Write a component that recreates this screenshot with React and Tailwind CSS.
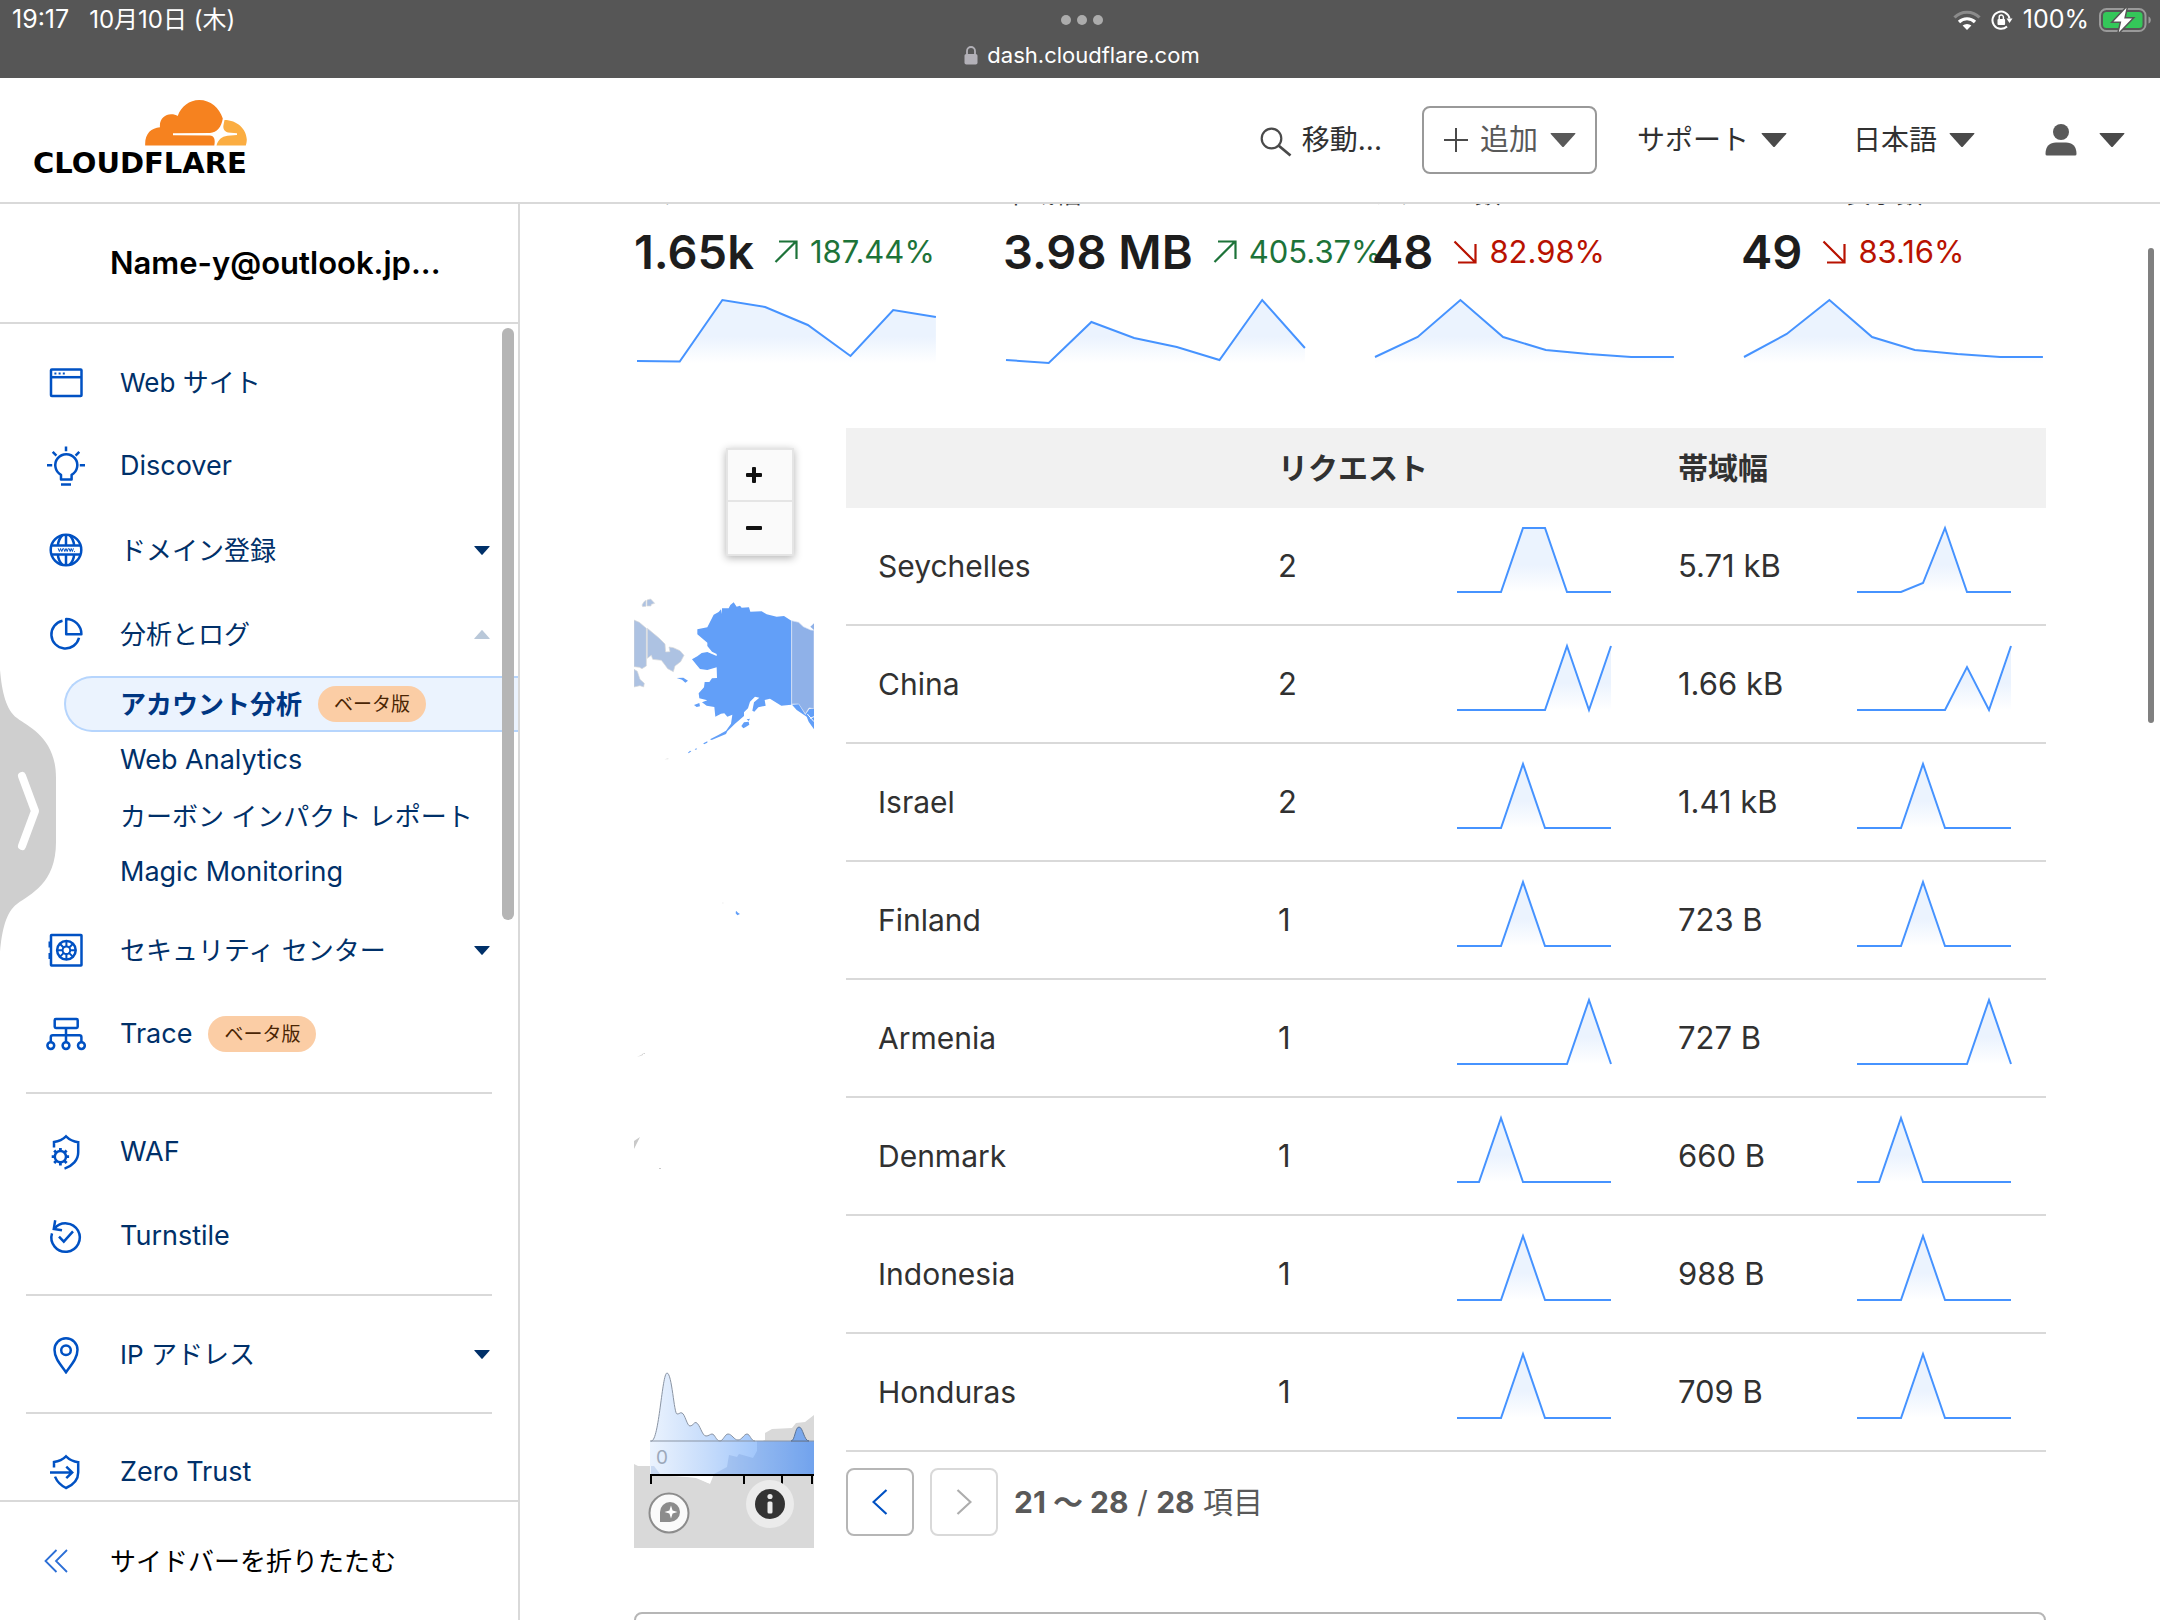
import React, { useId } from "react";

const sparkX = (i, step, start) => start + i * step;

function Sparkline({ ys, width, height, start, step, base, className }) {
  const id = useId();
  const pts = ys.map((y, i) => `${sparkX(i, step, start)},${y}`);
  const last = sparkX(ys.length - 1, step, start);
  return (
    <svg viewBox={`0 0 ${width} ${height}`} preserveAspectRatio="none" className={className} aria-hidden="true">
      <defs>
        <linearGradient id={id} x1="0" y1="0" x2="0" y2={base} gradientUnits="userSpaceOnUse">
          <stop offset="0.6" stopColor="#ebf3fe" />
          <stop offset="1" stopColor="#ffffff" />
        </linearGradient>
      </defs>
      <polygon points={`${start},${base} ${pts.join(" ")} ${last},${base}`} fill={`url(#${id})`} />
      <polyline points={pts.join(" ")} fill="none" stroke="#4693ff" strokeWidth="2" vectorEffect="non-scaling-stroke" />
    </svg>
  );
}

const RowSpark = ({ v }) => (
  <Sparkline
    ys={v.map((n) => 68 - 64 * n)}
    width={160}
    height={84}
    start={3}
    step={22}
    base={68}
    className="h-[84px] w-[160px]"
  />
);

const peak = (at) => Array.from({ length: 8 }, (_, i) => (i === at ? 1 : 0));

const rows = [
  { name: "Seychelles", req: "2", bw: "5.71 kB", a: [0, 0, 0, 1, 1, 0, 0, 0], b: [0, 0, 0, 0.14, 1, 0, 0, 0] },
  { name: "China", req: "2", bw: "1.66 kB", a: [0, 0, 0, 0, 0, 1, 0, 1], b: [0, 0, 0, 0, 0, 0.67, 0, 1] },
  { name: "Israel", req: "2", bw: "1.41 kB", a: peak(3), b: peak(3) },
  { name: "Finland", req: "1", bw: "723 B", a: peak(3), b: peak(3) },
  { name: "Armenia", req: "1", bw: "727 B", a: peak(6), b: peak(6) },
  { name: "Denmark", req: "1", bw: "660 B", a: peak(2), b: peak(2) },
  { name: "Indonesia", req: "1", bw: "988 B", a: peak(3), b: peak(3) },
  { name: "Honduras", req: "1", bw: "709 B", a: peak(3), b: peak(3) },
];

const stats = [
  { label: "リクエスト", value: "1.65k", pct: "187.44%", up: true, ys: [64, 64.5, 3, 10, 28, 59, 13, 20] },
  { label: "帯域幅", value: "3.98 MB", pct: "405.37%", up: true, ys: [63, 66, 25, 41, 50, 63, 3, 51] },
  { label: "アクセス数", value: "48", pct: "82.98%", up: false, ys: [60, 40, 3, 40, 53, 57, 60, 60] },
  { label: "ページの表示数", value: "49", pct: "83.16%", up: false, ys: [60, 37, 3, 40, 53, 57, 60, 60] },
];

const NavSvg = ({ children }) => (
  <svg viewBox="0 0 40 40" className="size-10 shrink-0" fill="none" stroke="#0051c3" strokeWidth="2.5" aria-hidden="true">
    {children}
  </svg>
);

const icons = {
  site: (
    <NavSvg>
      <rect x="5" y="7.5" width="30.5" height="26.5" rx="0.8" />
      <path d="M5 15.2H35.5" />
      <path d="M8.4 11.4h2M12.6 11.4h2M16.8 11.4h2" strokeWidth="2" />
    </NavSvg>
  ),
  bulb: (
    <NavSvg>
      <path d="M15 33.5V28.8A11 11 0 1 1 25.6 28.8V33.5Z" strokeLinejoin="round" />
      <path d="M15 38.6H25M20 0.4V5.2M1 19.2H6.2M33.8 19.2H39M6.7 5.9L10.4 9.6M33.3 5.9L29.6 9.6" />
    </NavSvg>
  ),
  globe: (
    <NavSvg>
      <circle cx="20" cy="20" r="15.3" />
      <path d="M6 15.6H34M6 24.4H34M20 4.7V15.6M20 24.4V35.3M16.5 5C13.5 8 12.2 11.5 11.8 15.6M23.5 5C26.5 8 27.8 11.5 28.2 15.6M16.5 35C13.5 32 12.2 28.5 11.8 24.4M23.5 35C26.5 32 27.8 28.5 28.2 24.4" />
      <path d="M12.2 18.3l1.2 3.2 1.2-3 1.2 3 1.2-3.2M17.6 18.3l1.2 3.2 1.2-3 1.2 3 1.2-3.2M23 18.3l1.2 3.2 1-3 1.2 3 1-3.2M28 21.6h.9" strokeWidth="1" />
    </NavSvg>
  ),
  pie: (
    <NavSvg>
      <path d="M16.5 6.8A14 14 0 1 0 33 23.8" />
      <path d="M20.2 5V20.2H35.4A15.2 15.2 0 0 0 20.2 5Z" strokeLinejoin="round" />
    </NavSvg>
  ),
  safe: (
    <NavSvg>
      <rect x="5" y="5" width="30.5" height="30.5" rx="0.5" />
      <path d="M4 11.5v6M4 23v6" strokeWidth="3" />
      <circle cx="20.4" cy="20.3" r="9.3" />
      <circle cx="20.4" cy="20.3" r="3.8" strokeWidth="2" />
      <path d="M20.4 11v5.500M20.4 24.1v5.500M11.1 20.3h5.500M24.2 20.3h5.500M13.8 13.7l4 4M23 22.9l4 4M13.8 26.9l4-4M23 17.7l4-4" strokeWidth="2" />
    </NavSvg>
  ),
  trace: (
    <NavSvg>
      <rect x="8.700" y="5" width="23" height="9" rx="1.200" />
      <path d="M20 14V28M4.800 28V23.200Q4.800 21.200 6.800 21.200H33.400Q35.400 21.200 35.400 23.200V28" />
      <circle cx="4.800" cy="31.600" r="3.400" />
      <circle cx="20" cy="31.600" r="3.400" />
      <circle cx="35.400" cy="31.600" r="3.400" />
    </NavSvg>
  ),
  waf: (
    <NavSvg>
      <path d="M8 15.5V10C13 9.2 17 7.2 20 4.3C23 7.2 27.5 9.5 32.2 10.2V20.5C32.2 28 26.5 34 18.5 36.6" />
      <circle cx="14.4" cy="24.7" r="5.6" />
      <path d="M14.4 16v3M14.4 30.4v3M5.7 24.7h3M20.1 24.7h3M8.2 18.5l2.2 2.2M18.4 28.7l2.2 2.2M8.2 30.9l2.2-2.2M18.4 20.7l2.2-2.2" strokeWidth="2.8" />
    </NavSvg>
  ),
  turnstile: (
    <NavSvg>
      <path d="M8.4 12.8A14.2 14.2 0 1 1 6 17.4" />
      <path d="M9.2 4.3L7.8 12.9L16 14.3" />
      <path d="M13 20.6L17.8 25.6L27 15.4" />
    </NavSvg>
  ),
  pin: (
    <NavSvg>
      <path d="M20 38.2C15 31 8.5 24.5 8.5 15.8A11.5 11.5 0 0 1 31.5 15.8C31.5 24.5 25 31 20 38.2Z" />
      <circle cx="20" cy="16.2" r="4.8" />
    </NavSvg>
  ),
  zero: (
    <NavSvg>
      <path d="M8 15.5V10C13 9.2 17 7.2 20 4.3C23 7.2 27.5 9.5 32.2 10.2V20.5C32.2 28 27 33 20 36C14.5 33.2 11 29.5 9 24.6" />
      <path d="M4 20.4H26M20.3 14.6L26.2 20.4L20.3 26.2" />
    </NavSvg>
  ),
};

const Caret = ({ className = "h-[14px] w-[26px] text-[#4a4a4a]" }) => (
  <svg viewBox="0 0 26 14" preserveAspectRatio="none" className={className} fill="currentColor" aria-hidden="true">
    <path d="M1.2 0H24.8Q26 0 25.2 1L14 13.4Q13 14.4 12 13.4L0.8 1Q0 0 1.2 0Z" />
  </svg>
);

const Beta = () => (
  <span className="flex h-9 items-center rounded-full bg-[#fbcda5] px-4 text-[19px] leading-none text-[#4a2504]">ベータ版</span>
);

function NavItem({ icon, label, caret, badge, latin }) {
  return (
    <a href="#" className="flex h-[84px] items-center pl-[46px] pr-7 text-[#003069]">
      {icons[icon]}
      <span className={latin ? "pl-[34px] pr-4 text-[27px]" : "pl-[34px] pr-4"}>{label}</span>
      {badge && <Beta />}
      {caret && (
        <Caret
          className={caret === "up" ? "ml-auto h-[9px] w-4 rotate-180 text-[#b9c8d9]" : "ml-auto h-[9px] w-4 text-[#003069]"}
        />
      )}
    </a>
  );
}

const Divider = () => <hr className="my-4 ml-[26px] mr-[26px] border-t-2 border-[#d9d9d9]" />;

function CloudLogo() {
  return (
    <svg viewBox="0 0 102 46" className="h-[46px] w-[102px]" aria-hidden="true">
      <path
        fill="#f6821f"
        d="M0.2 45.6C-0.5 34 6 28 15 27.3C14 19 20 14.2 26 14.2C29 14.2 31 14.8 32.7 16C36 6.5 44.5 0 54.2 0C65.5 0 74.5 8 77.8 18.5C76.5 27 72 32.5 65 33L28 33.2V35.2L65 35.6C69 36.2 70.5 38.5 69.3 45.6Z"
      />
      <path
        fill="#fbad41"
        d="M79.5 20C92 20 101.500 29 101.800 39.500C101.800 42 101.200 44 100.800 45.600H71.500C73 40 76.500 36.500 82.500 35.800L92 35V33.300L83 32.600C79 31.500 77.800 28 78.500 25Z"
      />
    </svg>
  );
}

function StatusBar() {
  return (
    <div className="flex h-[78px] shrink-0 items-start justify-between bg-[#565656] pl-3 pr-2 text-[25px] text-white">
      <div className="flex h-10 flex-1 items-center gap-5">
        <span>19:17</span>
        <span className="text-[24px]">10月10日 (木)</span>
      </div>
      <div className="flex flex-col items-center">
        <div className="flex h-10 items-center gap-[6px]">
          <span className="size-[10px] rounded-full bg-[#acacac]" />
          <span className="size-[10px] rounded-full bg-[#acacac]" />
          <span className="size-[10px] rounded-full bg-[#acacac]" />
        </div>
        <div className="flex h-[30px] items-center gap-[9px]">
          <svg viewBox="0 0 14 19" className="h-[19px] w-[14px]" aria-hidden="true">
            <rect x="0.5" y="8" width="13" height="10.5" rx="1.8" fill="#b3b1b8" />
            <path d="M3 8.5V5A4 4 0 0 1 11 5V8.5" fill="none" stroke="#b3b1b8" strokeWidth="1.8" />
          </svg>
          <span className="text-[22px]">dash.cloudflare.com</span>
        </div>
      </div>
      <div className="flex h-10 flex-1 items-center justify-end gap-[10px]">
        <svg viewBox="0 0 28 20" className="h-5 w-7" fill="none" aria-hidden="true">
          <path d="M1.5 7.5A17.5 17.5 0 0 1 26.5 7.5" stroke="#8b8b8b" strokeWidth="3.2" />
          <path d="M6 12A11.5 11.5 0 0 1 22 12" stroke="#fff" strokeWidth="3.2" />
          <path d="M9.6 15.6A6.5 6.5 0 0 1 18.4 15.6L14 20Z" fill="#fff" />
        </svg>
        <svg viewBox="0 0 22 20" className="h-5 w-[22px]" fill="none" aria-hidden="true">
          <path d="M18.5 8.5A8.6 8.6 0 1 0 16 16.5" stroke="#fff" strokeWidth="2" />
          <path d="M15.5 8.5H21.5L18.5 13Z" fill="#fff" />
          <rect x="6.5" y="9" width="7.6" height="6" rx="1" fill="#fff" />
          <path d="M8.2 9V7.2A2.1 2.1 0 0 1 12.4 7.2V9" stroke="#fff" strokeWidth="1.5" />
        </svg>
        <span>100%</span>
        <svg viewBox="0 0 53 26" className="h-[26px] w-[53px]" aria-hidden="true">
          <rect x="1" y="2" width="45.5" height="22" rx="6.5" fill="none" stroke="#9a9a9a" strokeWidth="2" />
          <rect x="4" y="5" width="39.5" height="16" rx="3.5" fill="#34c759" />
          <path d="M49.5 9.5C52.6 10.5 52.6 15.5 49.5 16.5Z" fill="#9a9a9a" />
          <path d="M27.5 0.8L14.5 14.5H22.3L19.8 25.3L33 11.5H25.2Z" fill="#fff" stroke="#565656" strokeWidth="3" paintOrder="stroke" />
        </svg>
      </div>
    </div>
  );
}

function Header() {
  return (
    <header className="flex h-[126px] shrink-0 items-center justify-between border-b-2 border-[#d9d9d9] pl-[33px] pr-[35px] text-[28px] text-[#313131]">
      <a href="#" className="flex flex-col items-end text-black">
        <CloudLogo />
        <span className="font-['DejaVu_Sans',sans-serif] text-[29px] font-bold leading-[34px]">CLOUDFLARE</span>
      </a>
      <div className="flex items-center">
        <button type="button" className="flex items-center gap-[10px]">
          <svg viewBox="0 0 32 30" className="mt-1 h-[30px] w-8" fill="none" stroke="#4a4a4a" strokeWidth="2.2" aria-hidden="true">
            <circle cx="11.5" cy="11.5" r="9.8" />
            <path d="M18.5 18.5L30.5 28.5" strokeWidth="2.8" />
          </svg>
          移動...
        </button>
        <button type="button" className="ml-10 flex h-[68px] items-center rounded-lg border-2 border-[#999999] pl-[19px] pr-[19px] text-[29px] text-[#595959]">
          <svg viewBox="0 0 26 26" className="mr-[11px] size-[26px]" stroke="#4a4a4a" strokeWidth="2" aria-hidden="true">
            <path d="M13 1V25M1 13H25" />
          </svg>
          追加
          <Caret className="ml-3 h-[14px] w-[26px] text-[#595959]" />
        </button>
        <button type="button" className="ml-10 flex items-center gap-3">
          サポート
          <Caret />
        </button>
        <button type="button" className="ml-[66px] flex items-center gap-3">
          日本語
          <Caret />
        </button>
        <button type="button" aria-label="アカウント" className="ml-[70px] flex items-center gap-[22px]">
          <svg viewBox="0 0 32 32" className="size-8" fill="#595959" aria-hidden="true">
            <ellipse cx="16" cy="8" rx="8" ry="8" />
            <path d="M0.5 30C0.5 22 5 18.5 11 18.5H21C27 18.5 31.5 22 31.5 30Q31.5 31.5 30 31.5H2Q0.5 31.5 0.5 30Z" />
          </svg>
          <Caret />
        </button>
      </div>
    </header>
  );
}

function Sidebar() {
  return (
    <aside className="relative flex w-[520px] shrink-0 flex-col border-r-2 border-[#d9d9d9] text-[26px]">
      <div className="flex h-[120px] shrink-0 items-center border-b-2 border-[#d9d9d9] pl-[110px] text-[31px] font-semibold text-black">
        Name-y@outlook.jp...
      </div>
      <nav className="min-h-0 flex-1 overflow-hidden pt-4">
        <NavItem icon="site" label="Web サイト" />
        <NavItem icon="bulb" label="Discover" latin />
        <NavItem icon="globe" label="ドメイン登録" caret="down" />
        <NavItem icon="pie" label="分析とログ" caret="up" />
        <div className="mb-2 ml-16 text-[#003069]">
          <a
            href="#"
            className="flex h-14 items-center gap-4 rounded-l-full border-2 border-r-0 border-[#b6d5fd] bg-[#ebf3fe] pl-[54px] font-bold text-[#003682]"
          >
            アカウント分析
            <span className="font-normal">
              <Beta />
            </span>
          </a>
          <a href="#" className="flex h-14 items-center pl-14 text-[27px]">Web Analytics</a>
          <a href="#" className="flex h-14 items-center pl-14">カーボン インパクト レポート</a>
          <a href="#" className="flex h-14 items-center pl-14 text-[27px]">Magic Monitoring</a>
        </div>
        <NavItem icon="safe" label="セキュリティ センター" caret="down" />
        <NavItem icon="trace" label="Trace" badge latin />
        <Divider />
        <NavItem icon="waf" label="WAF" latin />
        <NavItem icon="turnstile" label="Turnstile" latin />
        <Divider />
        <NavItem icon="pin" label="IP アドレス" caret="down" />
        <Divider />
        <NavItem icon="zero" label="Zero Trust" latin />
      </nav>
      <button type="button" className="flex h-[120px] shrink-0 items-center border-t-2 border-[#d9d9d9] pl-11 text-black">
        <svg viewBox="0 0 24 24" className="size-6" fill="none" stroke="#2c6fd6" strokeWidth="1.8" aria-hidden="true">
          <path d="M12.5 1L1.5 12L12.5 23M23 1L12 12L23 23" />
        </svg>
        <span className="pl-[42px]">サイドバーを折りたたむ</span>
      </button>
      <div className="absolute right-1 top-[124px] h-[592px] w-3 rounded-full bg-[#b5b5b5]" />
      <button type="button" aria-label="開く" className="absolute left-0 top-[466px] h-[282px] w-14">
        <svg viewBox="0 0 56 282" className="h-full w-full" aria-hidden="true">
          <path
            fill="#cfcfcf"
            d="M0 0C2 22 6 40 17 48C30 58 56 68 56 108V172C56 214 30 224 17 234C6 242 2 260 0 282Z"
          />
          <path d="M22 106L35 141L22 176" fill="none" stroke="#fff" strokeWidth="8" strokeLinecap="round" strokeLinejoin="round" />
        </svg>
      </button>
    </aside>
  );
}

function WorldMap() {
  return (
    <div className="relative h-[1120px] w-[180px] shrink-0 overflow-hidden">
      <svg viewBox="0 0 180 1120" className="h-full w-full" aria-hidden="true">
        <defs>
          <linearGradient id="legend" x1="16" y1="0" x2="180" y2="0" gradientUnits="userSpaceOnUse">
            <stop offset="0" stopColor="#ebf3fe" />
            <stop offset="0.35" stopColor="#c6dcfb" />
            <stop offset="0.65" stopColor="#a2c7fb" />
            <stop offset="1" stopColor="#78acf8" />
          </linearGradient>
        </defs>
        <g transform="translate(-14 -8) scale(0.33333)">
          <g fill="#adc2e2" stroke="#d9d9d9" strokeWidth="2">
            <path d="M42 600L58 607L79 625L79 738L66 746L58 742L42 740Z" />
            <path d="M42 748L52 754L60 778L73 790L71 801L60 797L42 801Z" />
            <path d="M82 625L100 640L118 655L135 672L137 696L150 695L147 681L160 683L180 692L192 706L182 725L165 738L160 755L143 746L135 735L124 721L98 718L94 706L82 715Z" />
            <path d="M66 555L72 545L78 541V559L68 560Z" />
            <path d="M81 540L92 537L104 550L94 553L93 558H81Z" />
          </g>
          <path
            fill="#629ff8"
            d="M232 628L262 622L281 584L296 576L303 568L306 582V565H326L331 555L341 547L350 560L360 557L365 563L387 562L391 575L425 574L440 583L470 590L492 588L514 602V854L484 857L450 836L434 840L437 857L415 862L403 875L397 872L402 847L418 833L405 830L390 845L384 865L372 877V888L345 911L322 934L318 942L275 960L270 958L295 945L318 932L333 911L337 884L322 890L313 880L303 881L286 890L283 861L260 857L246 847L262 841L238 835L236 820L252 802L254 786L268 786L276 775L291 774L290 742L262 750L240 747L230 735L216 718L232 709L245 699L262 696L290 708V702L276 695L262 678L262 668L232 643Z"
          />
          <path fill="#8fb1e8" stroke="#d9e3f5" strokeWidth="2" d="M515 602L536 607L550 620L572 630L582 631V866L567 864L556 882L536 852H515Z" />
          <path fill="#629ff8" d="M516 854L536 853L556 884L568 867L582 866V928L566 905L560 890L530 870Z" />
          <path fill="none" stroke="#fff" strokeWidth="3" d="M562 882L582 905M570 895L582 890" />
          <path fill="#8fb1e8" d="M571 620L582 610V630Z" />
          <path
            fill="#629ff8"
            d="M170 774L190 773L204 782L196 788L186 779ZM222 855L238 849L240 859L230 861ZM364 918L372 907L386 905L388 914L376 922L370 925ZM380 898L390 896L386 903ZM250 970L262 964L262 968L252 973ZM204 998L210 992L214 994L206 1000ZM224 988L230 984L229 990ZM348 1472L354 1478L360 1482L352 1486L347 1480Z"
          />
          <path fill="#dedede" d="M133 1018L145 1015V1018ZM306 1448h5v2h-5Z" />
        </g>
        <path fill="#c9c9c9" d="M3 629l6-3v1zM8 626l3-1v1zM0 713l6-4-3 6-3 6zM25 740h2v1h-2z" />
        <path
          fill="#d9d9d9"
          d="M0 1036L4 1038H20L26 1046L62 1050L74 1055L80 1044L93 1039L95 1027L103 1029L105 1026L119 1030L123 1023V1015L131 1012V1005L138 1001L158 1000L162 995L171 994L180 987V1120H0Z"
        />
        <path d="M35 1048L62 1049L76 1056L80 1046Z" fill="#fff" />
        <rect x="16" y="1013" width="164" height="34" fill="url(#legend)" />
        <path d="M17 1046H26L20 1038H17ZM80 1046L93 1039L95 1027L103 1029L105 1026L119 1030L123 1023V1013H180V1046Z" fill="#5b86c8" opacity="0.22" />
        <path
          d="M17 1013C25 1015 28 945 33 945C38 945 40 986 43 986C46 986 46 984 48 985C51 986 53 998 56 998C59 998 60 994 62 994.5C66 996 68 1008 72 1008C75 1008 76 1006 78 1006C81 1006 82 1013 86 1013C89 1013 91 1006 94 1006C98 1006 100 1012 104 1012C108 1012 110 1006 113 1006C116 1006 117 1013 121 1013Z"
          fill="url(#legend)"
        />
        <path
          d="M17 1013C25 1015 28 945 33 945C38 945 40 986 43 986C46 986 46 984 48 985C51 986 53 998 56 998C59 998 60 994 62 994.5C66 996 68 1008 72 1008C75 1008 76 1006 78 1006C81 1006 82 1013 86 1013C89 1013 91 1006 94 1006C98 1006 100 1012 104 1012C108 1012 110 1006 113 1006C116 1006 117 1013 121 1013M16 1013H180"
          fill="none"
          stroke="#8a94a3"
        />
        <path d="M157 1013C161 1013 161 999 165 999C169 999 170 1013 175 1013Z" fill="#7aa8ec" stroke="#5d7394" />
        <text x="22" y="1036" fontSize="19" fill="#9da9ba">0</text>
        <path d="M16 1047H180M17 1046V1056M110 1047V1056M148 1047V1056M178 1047V1056" fill="none" stroke="#000" strokeWidth="2" />
        <circle cx="35" cy="1085" r="19.5" fill="#fafafa" stroke="#8c8c8c" strokeWidth="2" />
        <path d="M26 1094V1084A10 10 0 1 1 36 1094Z" fill="#8c8c8c" />
        <path d="M37 1077.5L38.6 1082.4L43.5 1084L38.6 1085.6L37 1090.5L35.4 1085.6L30.5 1084L35.4 1082.4Z" fill="#fff" />
        <circle cx="136" cy="1076" r="24" fill="#ebebeb" />
        <circle cx="136" cy="1076" r="15" fill="#333" />
        <circle cx="136" cy="1068.5" r="2.6" fill="#ebebeb" />
        <rect x="133.5" y="1073.500" width="5" height="12" rx="1.500" fill="#ebebeb" />
      </svg>
      <div className="absolute right-5 top-5 flex w-[68px] flex-col divide-y-2 divide-[#e5e5e5] border-2 border-[#e5e5e5] bg-[#fafafa] shadow-[0_2px_8px_rgba(0,0,0,0.3)]">
        <button type="button" aria-label="Zoom in" className="flex h-[52px] items-center pl-[18px]">
          <svg viewBox="0 0 16 16" className="size-4" fill="#111" aria-hidden="true">
            <rect x="6" width="4" height="16" rx="1" />
            <rect y="6" width="16" height="4" rx="1" />
          </svg>
        </button>
        <button type="button" aria-label="Zoom out" className="flex h-[52px] items-center pl-[18px]">
          <svg viewBox="0 0 16 16" className="size-4" fill="#111" aria-hidden="true">
            <rect y="6" width="16" height="4" rx="1" />
          </svg>
        </button>
      </div>
    </div>
  );
}

function Trend({ up, pct }) {
  return (
    <span className={up ? "flex items-center gap-3 text-[31px] text-[#1d7339]" : "flex items-center gap-3 text-[31px] text-[#b81201]"}>
      <svg viewBox="0 0 24 24" className="size-6" fill="none" stroke="currentColor" strokeWidth="2.2" aria-hidden="true">
        {up ? <path d="M1.5 22L22 1.5M5 1.5H22.5V19" /> : <path d="M1.5 1.5L22 22M5 22.5H22.5V4" />}
      </svg>
      {pct}
    </span>
  );
}

function Main() {
  return (
    <main className="relative min-w-0 flex-1 overflow-hidden px-[114px]">
      <section className="-mt-[23px] grid grid-cols-4 gap-16">
        {stats.map((s) => (
          <div key={s.label} className="min-w-0">
            <div className="text-[26px] leading-[26px] text-[#313131]">{s.label}</div>
            <div className="mt-[15px] flex h-[60px] items-center gap-5 whitespace-nowrap">
              <span className="text-[47px] font-semibold text-[#1d1d1d]">{s.value}</span>
              <Trend up={s.up} pct={s.pct} />
            </div>
            <Sparkline ys={s.ys} width={305} height={72} start={3} step={42.7} base={66} className="mt-[15px] h-[72px] w-full" />
          </div>
        ))}
      </section>
      <section className="mt-[59px] flex gap-8">
        <WorldMap />
        <div className="min-w-0 flex-1">
          <table className="w-full table-fixed border-separate border-spacing-0 text-[30px] text-[#313131]">
            <thead>
              <tr className="h-20 bg-[#f1f1f1] text-left">
                <th aria-label="Country" />
                <th className="px-8 font-bold">リクエスト</th>
                <th className="px-8 font-bold">帯域幅</th>
              </tr>
            </thead>
            <tbody>
              {rows.map((r) => (
                <tr key={r.name} className="h-[118px]">
                  <td className="border-b-2 border-[#d9d9d9] px-8">{r.name}</td>
                  <td className="border-b-2 border-[#d9d9d9] px-8 text-[31px]">
                    <div className="flex items-center justify-between">
                      {r.req}
                      <RowSpark v={r.a} />
                    </div>
                  </td>
                  <td className="border-b-2 border-[#d9d9d9] px-8 text-[31px]">
                    <div className="flex items-center justify-between">
                      {r.bw}
                      <RowSpark v={r.b} />
                    </div>
                  </td>
                </tr>
              ))}
            </tbody>
          </table>
          <div className="mt-4 flex items-center gap-4 text-[30px] text-[#595959]">
            <button type="button" aria-label="前へ" className="flex size-[68px] items-center justify-center rounded-lg border-2 border-[#b6b6b6]">
              <svg viewBox="0 0 16 26" className="h-[26px] w-4" fill="none" stroke="#0051c3" strokeWidth="2.2" aria-hidden="true">
                <path d="M14.5 1L1.5 13L14.5 25" />
              </svg>
            </button>
            <button type="button" disabled aria-label="次へ" className="flex size-[68px] items-center justify-center rounded-lg border-2 border-[#d9d9d9]">
              <svg viewBox="0 0 16 26" className="h-[26px] w-4" fill="none" stroke="#adadad" strokeWidth="2.2" aria-hidden="true">
                <path d="M1.5 1L14.5 13L1.5 25" />
              </svg>
            </button>
            <span>
              <b>21 〜 28</b> / <b>28</b> 項目
            </span>
          </div>
        </div>
      </section>
      <section className="mt-16 h-40 rounded-lg border-2 border-[#b6b6b6]" />
      <div className="absolute right-[6px] top-11 h-[475px] w-[6px] rounded-full bg-[#808080]" />
    </main>
  );
}

export default function App() {
  return (
    <div className="flex h-screen flex-col overflow-hidden bg-white font-['Inter','Noto_Sans_CJK_JP',sans-serif]">
      <StatusBar />
      <Header />
      <div className="flex min-h-0 flex-1">
        <Sidebar />
        <Main />
      </div>
    </div>
  );
}
